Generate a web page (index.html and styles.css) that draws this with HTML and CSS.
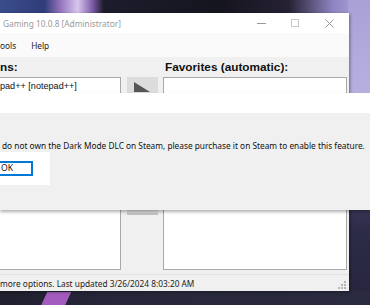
FILE: index.html
```html
<!DOCTYPE html>
<html>
<head>
  <title>Dark Mode DLC</title>
  <link rel="stylesheet" href="styles.css">
</head>
<body>
  <div class="desktop">
    <div class="wall-top"></div>
    <div class="wall-right"></div>
    <div class="wall-bottom"><span class="wall-shape"></span></div>

    <div class="main-window">
      <div class="titlebar">
        <span class="title-text">Gaming 10.0.8 [Administrator]</span>
        <span class="ctl ctl-min"></span>
        <span class="ctl ctl-max"></span>
        <span class="ctl ctl-close">
          <svg width="9" height="9" viewBox="0 0 9 9"><path d="M0.5 0.5 L8.5 8.5 M8.5 0.5 L0.5 8.5" stroke="#999" stroke-width="1" fill="none"/></svg>
        </span>
      </div>
      <div class="menubar">
        <span class="menu-item">ools</span>
        <span class="menu-item">Help</span>
      </div>
      <div class="client">
        <div class="labels">
          <span class="label label-left">ns:</span>
          <span class="label label-right">Favorites (automatic):</span>
        </div>
        <div class="lists">
          <div class="listbox list-left">
            <div class="list-row">pad++ [notepad++]</div>
          </div>
          <div class="mover">
            <div class="move-btn">
              <svg width="16" height="10" viewBox="0 0 16 10"><path d="M0 0 L16 10 L0 10 Z" fill="#555"/></svg>
            </div>
          </div>
          <div class="listbox list-right"></div>
        </div>
      </div>
      <div class="statusbar">
        <span class="status-text">more options. Last updated 3/26/2024 8:03:20 AM</span>
        <span class="grip">
          <svg width="9" height="8" viewBox="0 0 9 8">
            <rect x="7" y="0" width="2" height="2" fill="#b5b5b5"/>
            <rect x="4" y="3" width="2" height="2" fill="#b5b5b5"/>
            <rect x="7" y="3" width="2" height="2" fill="#b5b5b5"/>
            <rect x="1" y="6" width="2" height="2" fill="#b5b5b5"/>
            <rect x="4" y="6" width="2" height="2" fill="#b5b5b5"/>
            <rect x="7" y="6" width="2" height="2" fill="#b5b5b5"/>
          </svg>
        </span>
      </div>
    </div>

    <div class="dialog">
      <div class="dialog-title"></div>
      <div class="dialog-body">
        <p class="dialog-message">do not own the Dark Mode DLC on Steam, please purchase it on Steam to enable this feature.</p>
        <div class="dialog-buttons">
          <button class="ok-btn">OK</button>
        </div>
      </div>
    </div>
  </div>
</body>
</html>
```

FILE: styles.css
```css
body {
  margin: 0;
  padding: 0;
  font-family: "Noto Sans", "Open Sans", sans-serif;
  overflow: hidden;
}

.desktop {
  position: relative;
  width: 370px;
  height: 305px;
  background: #2a2a40;
  overflow: hidden;
}

/* wallpaper bits that peek around the windows */
.wall-top {
  height: 13px;
  background: linear-gradient(90deg, #3b4d8c 0%, #2f3d78 12%, #8e6fb8 16%, #d8c6ee 21%, #7d5ba8 25%, #1c1c2c 28%, #15151f 60%, #262133 78%, #8f84c2 90%, #b6aee0 100%);
}

.wall-right {
  position: absolute;
  right: 0;
  top: 0;
  width: 22px;
  height: 305px;
  background: linear-gradient(180deg, #a9a0d6 0%, #bdb4e4 40%, #9f95cc 64%, #3a3658 67%, #2d2c48 75%, #26253c 100%);
}

.wall-bottom {
  position: absolute;
  left: 0;
  bottom: 0;
  width: 370px;
  height: 14px;
  background: linear-gradient(90deg, #1f1f2e 0%, #27263a 30%, #2a2a40 100%);
}

.wall-shape {
  position: absolute;
  left: 44px;
  top: 1px;
  width: 24px;
  height: 14px;
  background: #a35cbd;
  transform: skewX(-25deg);
}

.main-window {
  position: absolute;
  left: 0;
  top: 13px;
  width: 349px;
  height: 278px;
  background: #f0f0f0;
  display: flex;
  flex-direction: column;
  box-shadow: 1px 1px 3px rgba(0, 0, 0, 0.4);
}

.titlebar {
  height: 20px;
  background: #fff;
  display: flex;
  align-items: center;
}

.title-text {
  flex: 1;
  padding-left: 3px;
  font-size: 8.3px;
  color: #9a9a9a;
  text-align: left;
}

.ctl {
  display: flex;
  align-items: center;
  justify-content: center;
  width: 34px;
  height: 20px;
}

.ctl-min::before {
  content: "";
  width: 9px;
  height: 1px;
  background: #999;
}

.ctl-max::before {
  content: "";
  width: 6px;
  height: 6px;
  border: 1px solid #c8c8c8;
}

.ctl-close {
  margin-right: 3px;
}

.menubar {
  height: 25px;
  background: #fafafa;
  display: flex;
  align-items: center;
  gap: 15px;
  font-size: 8.3px;
  color: #222;
}

.client {
  flex: 1;
  display: flex;
  flex-direction: column;
}

.labels {
  height: 20px;
  display: flex;
  align-items: center;
  font-family: "Liberation Sans", Arial, sans-serif;
  font-weight: bold;
  font-size: 11.8px;
  color: #111;
}

.label-left {
  width: 165px;
}

.lists {
  display: flex;
  height: 193px;
}

.listbox {
  background: #fff;
  border: 1px solid #a8a8a8;
}

.list-left {
  width: 120px;
  border-left: none;
}

.list-row {
  font-family: "Liberation Sans", Arial, sans-serif;
  font-size: 9.1px;
  color: #111;
  padding: 3px 0 2px 0;
  border-bottom: 1px solid #d8d8d8;
}

.mover {
  width: 42px;
  display: flex;
  justify-content: center;
}

.move-btn {
  width: 31px;
  height: 138px;
  background: #dcdcdc;
  border-bottom: 2px solid #c4c4c4;
  display: flex;
  justify-content: center;
  padding-top: 5px;
  box-sizing: border-box;
}

.list-right {
  width: 182px;
}

.statusbar {
  margin-top: 4px;
  height: 16px;
  border-top: 1px solid #e2e2e2;
  display: flex;
  align-items: center;
  justify-content: space-between;
  font-size: 8.3px;
  color: #222;
}

.grip {
  display: flex;
  margin-right: 3px;
  margin-top: 4px;
}

.dialog {
  position: absolute;
  left: 0;
  top: 93px;
  width: 370px;
  box-shadow: 0 2px 3px rgba(0, 0, 0, 0.3);
}

.dialog-title {
  height: 20px;
  background: #fff;
}

.dialog-body {
  height: 97px;
  background: #f0f0f0;
  padding-top: 27px;
  box-sizing: border-box;
}

.dialog-message {
  margin: 0;
  padding-left: 2px;
  font-size: 8.3px;
  color: #111;
  white-space: nowrap;
}

.dialog-buttons {
  margin-top: 1px;
  width: 50px;
  height: 33px;
  background: #fff;
  display: flex;
  align-items: center;
}

.ok-btn {
  width: 33px;
  height: 15px;
  margin: 0;
  padding: 0 0 0 1px;
  border: 2px solid #0078d7;
  border-left: none;
  background: #fff;
  font-family: "Noto Sans", "Open Sans", sans-serif;
  font-size: 8.6px;
  color: #111;
  text-align: left;
  line-height: 11px;
}
```
